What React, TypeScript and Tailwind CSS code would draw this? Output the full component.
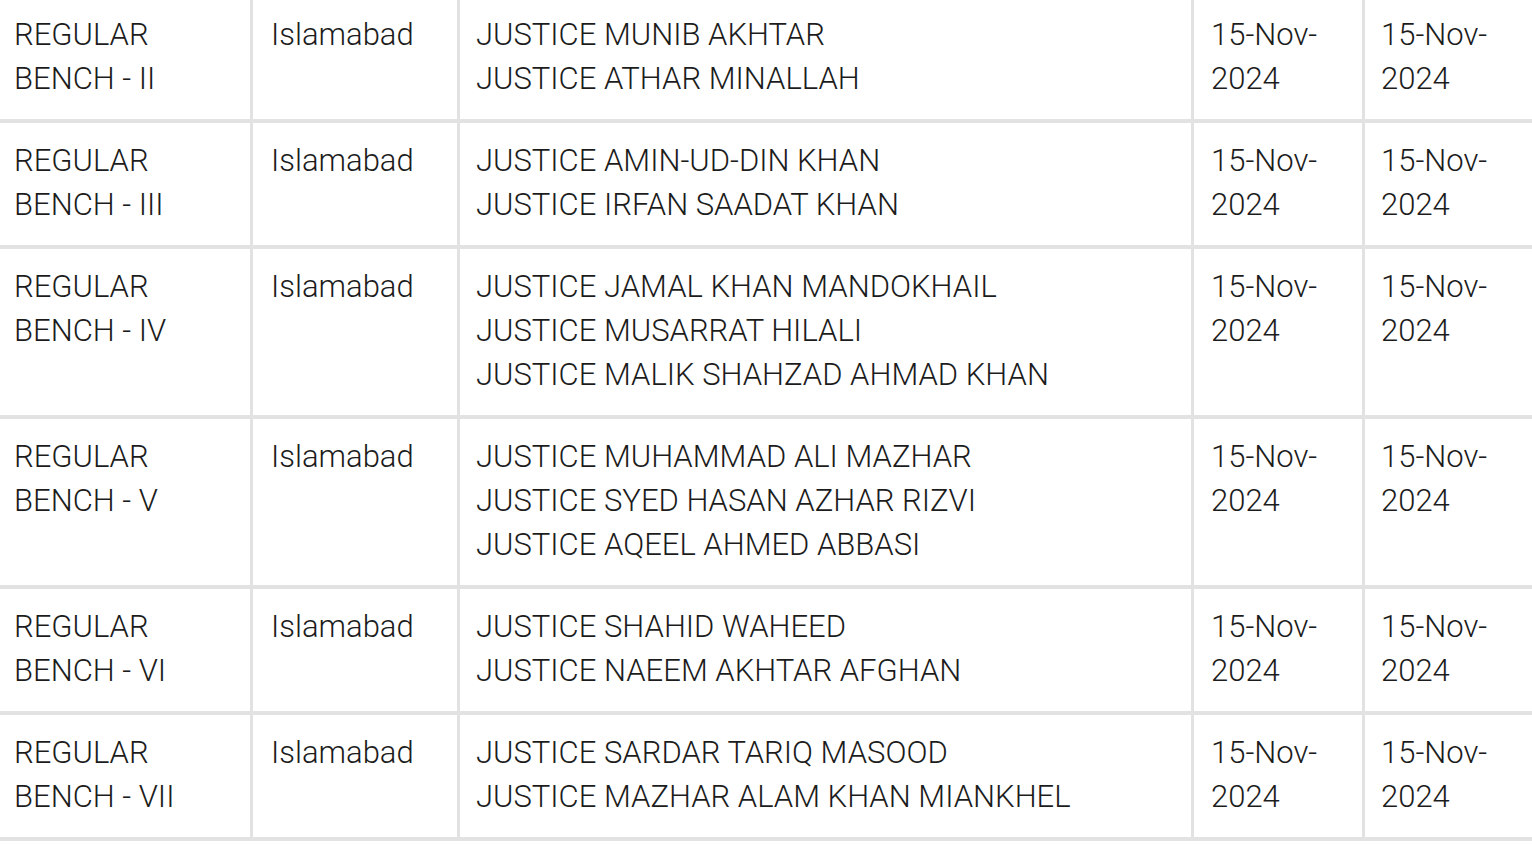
import React from "react";

type Bench = {
  name: string[];
  city: string;
  judges: string[];
};

const benches: Bench[] = [
  {
    name: ["REGULAR", "BENCH - II"],
    city: "Islamabad",
    judges: ["JUSTICE MUNIB AKHTAR", "JUSTICE ATHAR MINALLAH"],
  },
  {
    name: ["REGULAR", "BENCH - III"],
    city: "Islamabad",
    judges: ["JUSTICE AMIN-UD-DIN KHAN", "JUSTICE IRFAN SAADAT KHAN"],
  },
  {
    name: ["REGULAR", "BENCH - IV"],
    city: "Islamabad",
    judges: [
      "JUSTICE JAMAL KHAN MANDOKHAIL",
      "JUSTICE MUSARRAT HILALI",
      "JUSTICE MALIK SHAHZAD AHMAD KHAN",
    ],
  },
  {
    name: ["REGULAR", "BENCH - V"],
    city: "Islamabad",
    judges: [
      "JUSTICE MUHAMMAD ALI MAZHAR",
      "JUSTICE SYED HASAN AZHAR RIZVI",
      "JUSTICE AQEEL AHMED ABBASI",
    ],
  },
  {
    name: ["REGULAR", "BENCH - VI"],
    city: "Islamabad",
    judges: ["JUSTICE SHAHID WAHEED", "JUSTICE NAEEM AKHTAR AFGHAN"],
  },
  {
    name: ["REGULAR", "BENCH - VII"],
    city: "Islamabad",
    judges: ["JUSTICE SARDAR TARIQ MASOOD", "JUSTICE MAZHAR ALAM KHAN MIANKHEL"],
  },
];

const Lines: React.FC<{ items: string[] }> = ({ items }) => (
  <>
    {items.map((t, i) => (
      <div key={i}>{t}</div>
    ))}
  </>
);

export default function App() {
  return (
    <div className="min-h-screen w-full bg-white overflow-hidden font-['Roboto',sans-serif] font-light text-[31px] leading-[44px] text-[#1c1c1c]">
      <div className="grid grid-cols-[250px_204px_731px_168px_1fr] gap-x-[3px] gap-y-[4px] bg-[#e2e2e2] border-b-4 border-[#e2e2e2]">
        {benches.map((b, idx) => {
          const pad = idx === 0 ? "pt-[13px] pb-[18px]" : "pt-4 pb-[18px]";
          return (
            <React.Fragment key={idx}>
              <div className={`bg-white pl-[14px] pr-2 whitespace-nowrap ${pad}`}>
                <Lines items={b.name} />
              </div>
              <div className={`bg-white pl-[18px] pr-4 ${pad}`}>{b.city}</div>
              <div className={`bg-white px-4 whitespace-nowrap ${pad}`}>
                <Lines items={b.judges} />
              </div>
              <div className={`bg-white pl-[17px] pr-4 ${pad}`}>
                <Lines items={["15-Nov-", "2024"]} />
              </div>
              <div className={`bg-white px-4 ${pad}`}>
                <Lines items={["15-Nov-", "2024"]} />
              </div>
            </React.Fragment>
          );
        })}
      </div>
    </div>
  );
}
